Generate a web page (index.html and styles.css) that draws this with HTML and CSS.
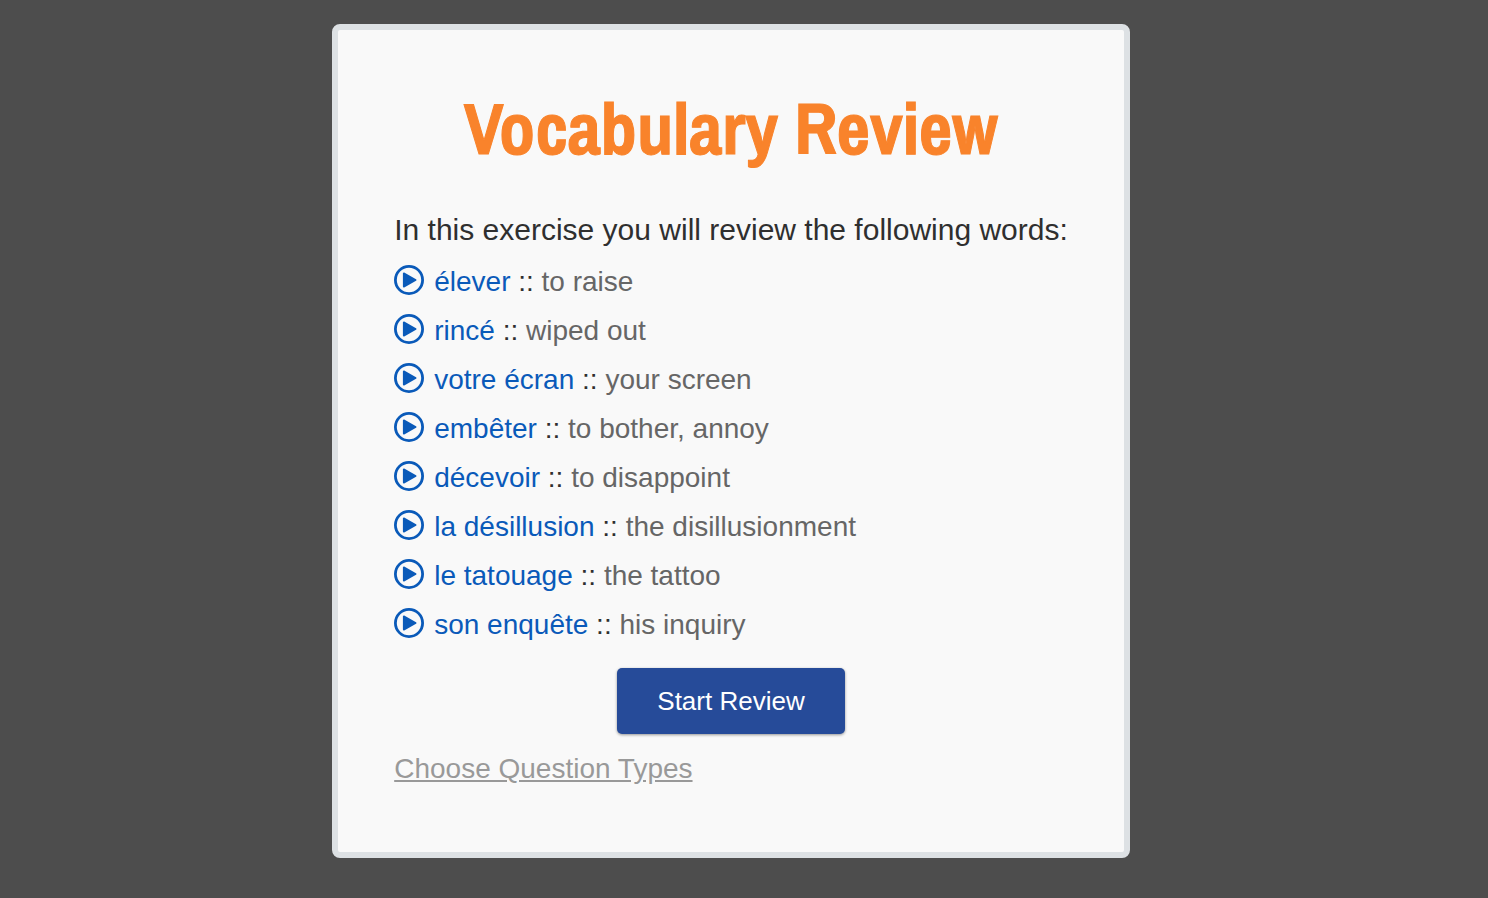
FILE: index.html
```html
<!DOCTYPE html>
<html lang="en">
<head>
  <meta charset="UTF-8" />
  <meta name="viewport" content="width=device-width, initial-scale=1.0" />
  <title>Vocabulary Review</title>
  <link rel="stylesheet" href="styles.css">
</head>
<body>
  <svg class="sprite" aria-hidden="true">
    <symbol id="play" viewBox="0 0 30 30">
      <circle cx="15" cy="15" r="13.6" fill="none" stroke="currentColor" stroke-width="2.8" />
      <path d="M9.8 8.4v13.2L21.6 15z" fill="currentColor" stroke="currentColor" stroke-width="1.8" stroke-linejoin="round" />
    </symbol>
  </svg>
  <main class="card">
    <h1>Vocabulary Review</h1>
    <p class="intro">In this exercise you will review the following words:</p>
    <ul class="words">
      <li><button class="play" aria-label="Play élever"><svg><use href="#play" /></svg></button><span><span class="word">élever</span> :: <span class="meaning">to raise</span></span></li>
      <li><button class="play" aria-label="Play rincé"><svg><use href="#play" /></svg></button><span><span class="word">rincé</span> :: <span class="meaning">wiped out</span></span></li>
      <li><button class="play" aria-label="Play votre écran"><svg><use href="#play" /></svg></button><span><span class="word">votre écran</span> :: <span class="meaning">your screen</span></span></li>
      <li><button class="play" aria-label="Play embêter"><svg><use href="#play" /></svg></button><span><span class="word">embêter</span> :: <span class="meaning">to bother, annoy</span></span></li>
      <li><button class="play" aria-label="Play décevoir"><svg><use href="#play" /></svg></button><span><span class="word">décevoir</span> :: <span class="meaning">to disappoint</span></span></li>
      <li><button class="play" aria-label="Play la désillusion"><svg><use href="#play" /></svg></button><span><span class="word">la désillusion</span> :: <span class="meaning">the disillusionment</span></span></li>
      <li><button class="play" aria-label="Play le tatouage"><svg><use href="#play" /></svg></button><span><span class="word">le tatouage</span> :: <span class="meaning">the tattoo</span></span></li>
      <li><button class="play" aria-label="Play son enquête"><svg><use href="#play" /></svg></button><span><span class="word">son enquête</span> :: <span class="meaning">his inquiry</span></span></li>
    </ul>
    <button class="start">Start Review</button>
    <a class="types" href="#">Choose Question Types</a>
  </main>
</body>
</html>
```
FILE: styles.css
```css
body {
  background: #4d4d4d;
  color: #2f2f2f;
  font-family: "Liberation Sans", Helvetica, Arial, sans-serif;
  font-size: 28px;
  margin: 0;
  padding: 24px 26px 40px 0;
  display: flex;
  justify-content: center;
}
.sprite {
  display: none;
}
.card {
  display: flex;
  flex-direction: column;
  background: #f9f9f9;
  border: 6px solid #dde1e4;
  border-radius: 8px;
  padding: 56px 56px 65px;
}
h1 {
  margin: 0 0 42px;
  color: #f9832b;
  font-family: "Liberation Sans Narrow", "Archivo Narrow", sans-serif;
  font-size: 72px;
  line-height: 84px;
  text-align: center;
  -webkit-text-stroke: 1px #f9832b;
}
.intro {
  margin: 0 0 9px;
  font-size: 30px;
  line-height: 36px;
}
.words {
  list-style: none;
  margin: 0;
  padding: 0;
}
.words li {
  display: flex;
  align-items: center;
  gap: 10px;
  line-height: 49px;
}
.play {
  background: none;
  border: none;
  margin: 0 0 4px;
  padding: 0;
  color: #0a5ab9;
  cursor: pointer;
  line-height: 0;
}
.play svg {
  width: 30px;
  height: 30px;
}
.word {
  color: #0a5ab9;
}
.meaning {
  color: #666;
}
.start {
  align-self: center;
  margin: 19px 0 17px;
  padding: 0 40px;
  background: #264b99;
  color: #fff;
  border: none;
  border-radius: 5px;
  box-shadow: 0 1px 3px rgba(0, 0, 0, 0.4);
  font-family: inherit;
  font-size: 26px;
  line-height: 66px;
  cursor: pointer;
}
.types {
  align-self: flex-start;
  color: #999;
  line-height: 36px;
}
```
